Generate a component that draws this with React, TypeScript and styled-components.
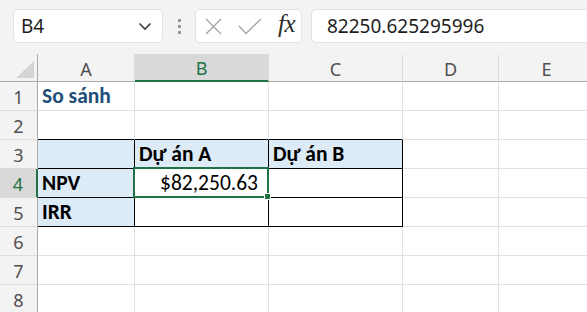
import React from "react";
import styled, { createGlobalStyle, css } from "styled-components";

const Global = createGlobalStyle`
  html, body { margin: 0; padding: 0; background: #f3f3f3; }
  body { width: 587px; height: 312px; overflow: hidden; }
  #root { width: 587px; height: 312px; overflow: hidden; }
`;

const UI_FONT = `"Segoe UI", "Noto Sans", "Open Sans", sans-serif`;
const CELL_FONT = `Carlito, Calibri, "Liberation Sans Narrow", "Noto Sans", sans-serif`;
const GREEN = "#217346";

const Page = styled.div`
  width: 587px;
  height: 312px;
  overflow: hidden;
  background: #f3f3f3;
  font-family: ${UI_FONT};
`;

const Toolbar = styled.div`
  height: 54px;
  display: flex;
  align-items: flex-start;
  padding: 9px 0 0 13px;
  box-sizing: border-box;
`;

const Box = styled.div`
  height: 34px;
  box-sizing: border-box;
  background: #ffffff;
  border: 1px solid #e3e3e3;
  border-radius: 5px;
  display: flex;
  align-items: center;
`;

const NameBox = styled(Box)`
  width: 150px;
  padding: 0 10px 0 7px;
  justify-content: space-between;
  font-size: 19px;
  color: #1f1f1f;
`;

const Dots = styled.div`
  width: 32px;
  height: 34px;
  display: flex;
  flex-direction: column;
  align-items: center;
  justify-content: center;
  gap: 3px;
  & > span {
    width: 3px;
    height: 3px;
    border-radius: 1px;
    background: #8f8f8f;
  }
`;

const FxBox = styled(Box)`
  width: 107px;
  padding: 0 6px 0 9px;
  justify-content: space-between;
`;

const Fx = styled.span`
  font-family: "Liberation Serif", "DejaVu Serif", serif;
  font-style: italic;
  font-weight: 400;
  font-size: 25px;
  color: #2b2b2b;
  letter-spacing: -0.5px;
  margin-top: -4px;
`;

const FormulaInput = styled(Box)`
  flex: 1;
  margin-left: 9px;
  margin-right: -10px;
  padding-left: 15px;
  font-size: 19px;
  color: #1f1f1f;
`;

const Sheet = styled.div`
  display: grid;
  grid-template-columns: 38px 97px 134px 134px 96px 96px;
  grid-template-rows: 28px repeat(8, 29px);
`;

const Corner = styled.div`
  box-sizing: border-box;
  border-right: 1px solid #ababab;
  border-bottom: 1px solid #ababab;
  display: flex;
  align-items: flex-end;
  justify-content: flex-end;
  padding: 0 3px 3px 0;
`;

const ColHead = styled.div<{ $sel?: boolean }>`
  box-sizing: border-box;
  border-right: 1px solid #dcdcdc;
  border-bottom: 1px solid #ababab;
  display: flex;
  align-items: center;
  justify-content: center;
  padding-top: 2px;
  font-size: 18px;
  color: #505050;
  ${(p) =>
    p.$sel &&
    css`
      background: #d9d9d9;
      color: ${GREEN};
      border-bottom: 2px solid ${GREEN};
    `}
`;

const RowHead = styled.div<{ $sel?: boolean }>`
  box-sizing: border-box;
  border-right: 1px solid #ababab;
  border-bottom: 1px solid #dcdcdc;
  display: flex;
  align-items: center;
  justify-content: center;
  padding-top: 2px;
  font-size: 18px;
  color: #505050;
  ${(p) =>
    p.$sel &&
    css`
      background: #d9d9d9;
      color: ${GREEN};
      border-right: 2px solid ${GREEN};
    `}
`;

const Cell = styled.div<{
  $fill?: boolean;
  $r?: boolean;
  $b?: boolean;
  $bold?: boolean;
  $right?: boolean;
  $title?: boolean;
}>`
  position: relative;
  box-sizing: border-box;
  background: ${(p) => (p.$fill ? "#ddebf7" : "#ffffff")};
  border-right: 1px solid ${(p) => (p.$r ? "#000000" : "#e1e1e1")};
  border-bottom: 1px solid ${(p) => (p.$b ? "#000000" : "#e1e1e1")};
  display: flex;
  align-items: flex-end;
  justify-content: ${(p) => (p.$right ? "flex-end" : "flex-start")};
  padding: 0 ${(p) => (p.$right ? "10px" : "4px")} 1px 4px;
  font-family: ${CELL_FONT};
  font-size: 21.5px;
  line-height: 26px;
  font-weight: ${(p) => (p.$bold || p.$title ? 700 : 400)};
  color: ${(p) => (p.$title ? "#1f4e79" : "#000000")};
  white-space: nowrap;
`;

const Selection = styled.div`
  position: absolute;
  left: -2px;
  top: -2px;
  right: -1px;
  bottom: -1px;
  border: 2px solid ${GREEN};
  pointer-events: none;
  z-index: 2;
  &::after {
    content: "";
    position: absolute;
    right: -4px;
    bottom: -4px;
    width: 5px;
    height: 5px;
    background: ${GREEN};
    border: 1px solid #ffffff;
  }
`;

type CellDef = {
  text?: string;
  fill?: boolean;
  r?: boolean;
  b?: boolean;
  bold?: boolean;
  right?: boolean;
  title?: boolean;
  sel?: boolean;
};

const cols = ["A", "B", "C", "D", "E"];

const rows: CellDef[][] = [
  [{ text: "So sánh", title: true }, {}, {}, {}, {}],
  [{ b: true }, { b: true }, { b: true }, {}, {}],
  [
    { fill: true, r: true, b: true },
    { text: "Dự án A", fill: true, r: true, b: true, bold: true },
    { text: "Dự án B", fill: true, r: true, b: true, bold: true },
    {},
    {},
  ],
  [
    { text: "NPV", fill: true, r: true, b: true, bold: true },
    { text: "$82,250.63", r: true, b: true, right: true, sel: true },
    { r: true, b: true },
    {},
    {},
  ],
  [
    { text: "IRR", fill: true, r: true, b: true, bold: true },
    { r: true, b: true },
    { r: true, b: true },
    {},
    {},
  ],
  [{}, {}, {}, {}, {}],
  [{}, {}, {}, {}, {}],
  [{}, {}, {}, {}, {}],
];

const Chevron = () => (
  <svg width="14" height="9" viewBox="0 0 14 9">
    <path d="M1.5 1.5 L7 7 L12.5 1.5" fill="none" stroke="#3a3a3a" strokeWidth="1.6" />
  </svg>
);

const Cross = () => (
  <svg width="17" height="17" viewBox="0 0 17 17">
    <path d="M1 1 L16 16 M16 1 L1 16" fill="none" stroke="#a6a6a6" strokeWidth="1.4" />
  </svg>
);

const Check = () => (
  <svg width="24" height="17" viewBox="0 0 24 17">
    <path d="M1 8 L8 15.5 L23 1" fill="none" stroke="#a6a6a6" strokeWidth="1.4" />
  </svg>
);

const CornerTri = () => (
  <svg width="18" height="17" viewBox="0 0 18 17">
    <path d="M18 0 L18 17 L0 17 Z" fill="#d4d4d4" />
  </svg>
);

export default function App() {
  return (
    <Page>
      <Global />
      <Toolbar>
        <NameBox>
          <span>B4</span>
          <Chevron />
        </NameBox>
        <Dots>
          <span />
          <span />
          <span />
        </Dots>
        <FxBox>
          <Cross />
          <Check />
          <Fx>fx</Fx>
        </FxBox>
        <FormulaInput>82250.625295996</FormulaInput>
      </Toolbar>
      <Sheet>
        <Corner>
          <CornerTri />
        </Corner>
        {cols.map((c) => (
          <ColHead key={c} $sel={c === "B"}>
            {c}
          </ColHead>
        ))}
        {rows.map((row, ri) => (
          <React.Fragment key={ri}>
            <RowHead $sel={ri === 3}>{ri + 1}</RowHead>
            {row.map((cell, ci) => (
              <Cell
                key={ci}
                $fill={cell.fill}
                $r={cell.r}
                $b={cell.b}
                $bold={cell.bold}
                $right={cell.right}
                $title={cell.title}
              >
                {cell.text}
                {cell.sel && <Selection />}
              </Cell>
            ))}
          </React.Fragment>
        ))}
      </Sheet>
    </Page>
  );
}
